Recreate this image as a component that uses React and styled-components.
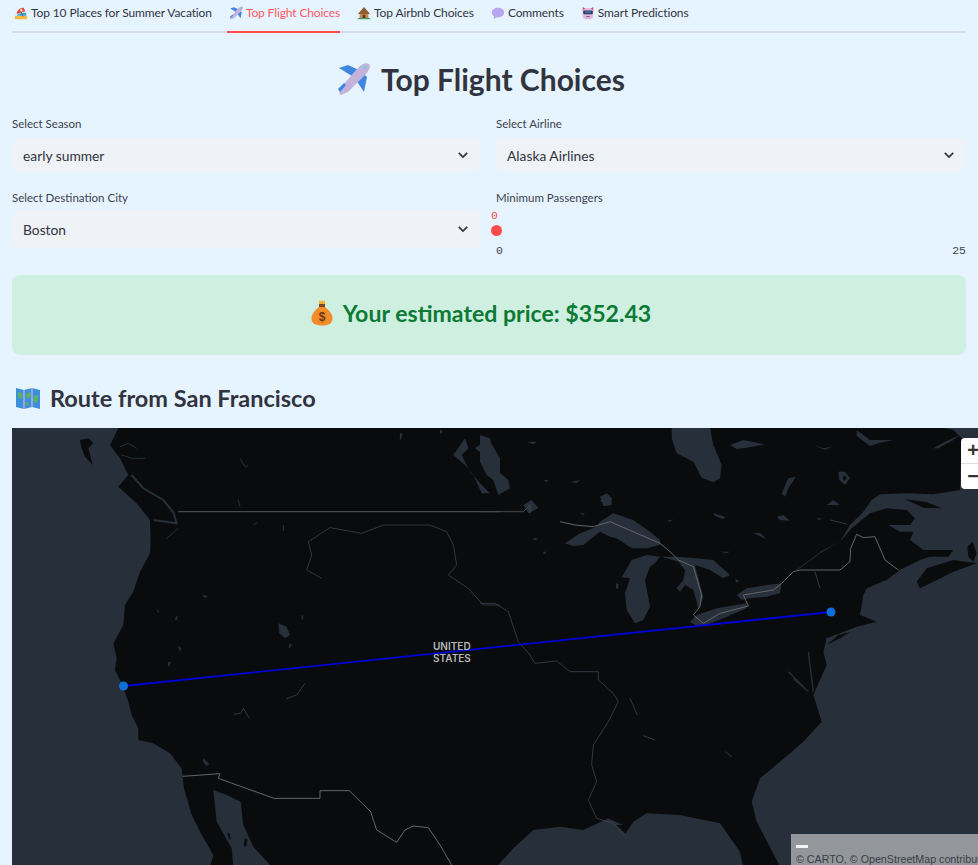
import React from 'react';
import styled, { createGlobalStyle } from 'styled-components';

const OCEAN = '#262f3a';
const RIVER = '#3a4149';
const BORDER = '#62666a';

const tabs = [
  { id: 'places', label: 'Top 10 Places for Summer Vacation', Icon: BeachIcon },
  { id: 'flights', label: 'Top Flight Choices', Icon: PlaneIcon, active: true },
  { id: 'airbnb', label: 'Top Airbnb Choices', Icon: HutIcon },
  { id: 'comments', label: 'Comments', Icon: BubbleIcon },
  { id: 'predictions', label: 'Smart Predictions', Icon: RobotIcon },
];

function BeachIcon({ size = 14 }) {
  return (
    <svg width={size} height={size} viewBox="0 0 16 16">
      <path d="M1 11h14v3a1 1 0 0 1-1 1H2a1 1 0 0 1-1-1z" fill="#f4b73f" />
      <path d="M3 11c2-3 7-4 11-3v3z" fill="#35a6dd" />
      <path d="M3 9c0-4 4-7 8-7l2 4z" fill="#e0453f" />
      <path d="M7 4l2-1 1 3-2 1z" fill="#f5f0ea" />
      <path d="M8 6l2 6" stroke="#7a4a2a" strokeWidth="1" />
    </svg>
  );
}

function PlaneIcon({ size = 14 }) {
  return (
    <svg width={size} height={size} viewBox="0 0 34 34">
      <path d="M16 14L3 6l9-3 13 6z" fill="#3f86e0" />
      <path d="M20 18l8 12 3-15-5-4z" fill="#3f86e0" />
      <path d="M33 2C30 0 26 2 22 6L6 24l-3 8 2 1 7-3L30 12c3-4 5-7 3-10z" fill="#c3b3da" />
      <path d="M2 27l6-6 2 2-6 7z" fill="#3f86e0" />
      <path d="M27 6l3-2.500 1 1.500-2.500 2.500z" fill="#5fd0e8" />
    </svg>
  );
}

function HutIcon({ size = 14 }) {
  return (
    <svg width={size} height={size} viewBox="0 0 16 16">
      <path d="M3 14V8h10v6z" fill="#c98a52" />
      <path d="M8 1L1 9h14z" fill="#8f5a34" />
      <path d="M6.500 10h3v4h-3z" fill="#5a3420" />
      <path d="M0 15c2-2 5-2 8-1 3-1 6-1 8 1z" fill="#3f9b5a" />
    </svg>
  );
}

function BubbleIcon({ size = 14 }) {
  return (
    <svg width={size} height={size} viewBox="0 0 16 16">
      <path d="M8 2c4 0 7 2 7 5.500S12 13 8 13c-.7 0-1.300 0-2-.2L3 15l.4-3.200C2 10.800 1 9.300 1 7.500 1 4 4 2 8 2z" fill="#b9a6ee" />
    </svg>
  );
}

function RobotIcon({ size = 14 }) {
  return (
    <svg width={size} height={size} viewBox="0 0 16 16">
      <path d="M2 1l3 2h6l3-2v5H2z" fill="#d9416a" />
      <rect x="2" y="3" width="12" height="12" rx="3.500" fill="#e2b7de" />
      <rect x="2.500" y="5" width="11" height="4.500" rx="1.500" fill="#2b3a5e" />
      <path d="M4.500 7h7" stroke="#59a8e8" strokeWidth="1" />
      <path d="M6 12h4" stroke="#7b4a78" strokeWidth="1" />
    </svg>
  );
}

function MoneyIcon() {
  return (
    <svg width="24" height="26" viewBox="0 0 24 26">
      <path d="M9 0l1.500 1.500L12 .5l1.500 1L15 0v4H9z" fill="#f2b233" />
      <rect x="9" y="4" width="6" height="3" fill="#7a4a22" />
      <path d="M9 7h6c4 3 7.500 7 7.500 11.500 0 5-4 7-10.500 7S1.500 23.500 1.500 18.500C1.500 14 5 10 9 7z" fill="#f08c2a" />
      <text x="12" y="21" textAnchor="middle" fontSize="12" fontWeight="700" fontFamily="Liberation Sans, sans-serif" fill="#6e3a12">$</text>
    </svg>
  );
}

function MapIcon() {
  return (
    <svg width="26" height="24" viewBox="0 0 26 24">
      <path d="M1 2l8 2 8-2 8 2v19l-8-2-8 2-8-2z" fill="#3d8fdc" />
      <path d="M9 4v19M17 2v19" stroke="#cdb8e8" strokeWidth="1.200" />
      <path d="M3 6l4 1 1 4-3 2-2-2zM11 8l4-2 1 4-3 3-2-2zM19 10l4-1 0 6-3 2-2-3zM11 16l3 1-1 3-2-1z" fill="#58b368" />
    </svg>
  );
}

const Chevron = () => (
  <svg width="12" height="12" viewBox="0 0 12 12">
    <path d="M1.800 3.800L6 8l4.200-4.200" fill="none" stroke="#31333f" strokeWidth="1.700" />
  </svg>
);

// map parts are traced in 3x coordinates, hence the scale on each group
const WestMap = () => (
  <g transform="translate(0 425) scale(.33333)">
    <path
      fill={OCEAN}
      d="M0 0L360 0L330 60L360 100L385 150L355 185L410 235L450 285L452 350L450 385L420 440L400 500L375 540L370 600L340 655L350 700L345 735L365 775L385 830L395 870L415 910L415 945L460 955L510 985L545 1030L552 1090L575 1170L600 1220L640 1290L630 1325L0 1325z"
    />
    <path fill="#0a0b0c" d="M240 45L265 40L280 55L265 70L278 120L255 95L245 70z" />
    <path fill={OCEAN} d="M640 1095L680 1110L722 1130L730 1200L760 1265L815 1325L700 1325L695 1270L650 1190z" />
    <path fill="#0a0b0c" d="M682 1222l8 6 2 18-6-6zM735 1240l8 4-6 22-6-6z" />
    <path
      d="M395 150L430 190L490 225L520 262L530 295L460 285"
      fill="none"
      stroke={OCEAN}
      strokeWidth="6"
    />
    <path fill={OCEAN} d="M1360 90L1395 40L1405 70L1385 90L1410 140L1445 180L1470 205L1445 205L1420 150L1395 120zM1425 70L1465 40L1500 100L1500 155L1465 100z" />
    <path fill={OCEAN} d="M835 595L860 605L870 630L855 640L838 625zM610 510l12 2-2 6-10-2zM470 550l8 12-4 2zM530 572l4 4-6 12-3-6zM535 662l8 6-1 12-6-8zM505 710l8 2-6 14-4-8zM870 655l6 4-8 12-2-6zM905 570l5 2-3 14-3-2zM610 1000l18 16-8 8-12-16zM1200 25l8 2-6 18-3-4zM1320 15l8 2-3 10-5-3z" />
    <g fill="none" stroke={OCEAN} strokeWidth="3">
      <path d="M360 65L385 55L410 70M365 90L395 100L435 100M500 340L535 310" />
      <path d="M720 100L735 125L745 122M715 225L720 245M760 300L772 292M850 300V318" />
    </g>
    <path d="M535 260H1500" fill="none" stroke="#47494b" strokeWidth="3.500" />
    <path
      d="M548 1054L660 1046L655 1060L822 1120H960V1097H1048L1112 1160L1130 1215L1190 1252L1215 1215L1240 1203L1285 1208L1320 1260L1355 1320"
      fill="none"
      stroke={BORDER}
      strokeWidth="3"
    />
    <path
      d="M1500 540L1450 540L1405 490L1345 450L1370 420L1360 360L1340 320L1290 300L1150 300L1085 325L990 308L925 350L935 390L920 435L965 460"
      fill="none"
      stroke={RIVER}
      strokeWidth="2.500"
    />
    <path d="M915 775L890 810L858 822M700 868L722 865L730 850L748 880" fill="none" stroke={RIVER} strokeWidth="2.500" />
  </g>
);

const EastMap = () => (
  <g transform="translate(480 425) scale(.33333)">
    <path
      fill={OCEAN}
      d="M1020 380L1080 350L1110 300L1150 260L1175 225L1200 208L1280 205L1360 208L1440 195L1445 40L1420 15L1385 8L1520 8L1520 1325L900 1325L830 1190L815 1130L840 1060L900 1010L970 950L1025 890L1000 810L1040 720L1030 680L1040 640L1080 625L1130 605L1190 590L1140 570L1150 510L1160 490L1220 465L1260 435L1320 405L1350 395L1405 395L1420 375L1380 375L1330 375L1290 345L1300 320L1260 320L1225 300L1290 300L1305 280L1280 255L1220 250L1170 265L1115 310L1080 350L1020 385z"
    />
    <path d="M1022 382L985 410L950 435" fill="none" stroke={OCEAN} strokeWidth="3" />
    <path
      fill={OCEAN}
      d="M50 1325L100 1270L160 1215L240 1205L310 1215L385 1180L430 1200L410 1200L455 1245L430 1235L460 1190L500 1165L600 1170L720 1195L780 1280L790 1325z"
    />
    <path fill="#0a0b0c" d="M1310 470L1340 430L1420 405L1490 415L1420 440L1360 470L1320 490zM1465 395L1462 365L1478 350L1490 385L1480 410zM1275 222L1340 232L1385 250L1330 248z" />
    <path fill="#0a0b0c" d="M1040 660L1075 630L1110 622L1080 640z" />
    <path fill={OCEAN} d="M1045 636L1105 622L1075 630z" />
    <path fill={OCEAN} d="M575 8L690 8L700 60L725 120L720 160L700 172L665 158L640 110L590 85L575 40z" />
    <path fill={OCEAN} d="M0 30L30 40L45 130L85 165L90 190L55 210L40 165L20 150L0 110z" />
    <path fill={OCEAN} d="M360 215L380 205L396 220L390 240L370 243zM905 205L925 160L948 155L925 190L915 215zM1360 70L1395 50L1440 30L1420 45L1375 70zM750 60L790 45L855 58L800 68L770 72zM140 50h30l-10 8zM270 172l30-8-10 10zM130 240l25-15 20 25-30 15zM1040 240L1060 225L1080 240L1060 240zM1010 278l15 3-8 5zM700 265L738 280L710 275zM190 165h15l-5 7zM160 340h10v5h-10zM190 380h8v6h-8zM1000 60l30 10 25 -5-20 10zM1130 15l40 30 70 0-40 8-30 10-40-30z" />
    <path d="M1075 140L1095 140L1110 160L1095 180L1078 165z" fill={OCEAN} />
    <path d="M1087 155L1096 152L1100 162L1092 168z" fill="#0a0b0c" />
    <path d="M985 680L1000 800M925 740L975 790M940 760L985 800M1040 640V660" fill="none" stroke={OCEAN} strokeWidth="4" />
    <g fill="none" stroke={RIVER} strokeWidth="2.500">
      <path d="M0 535H45L85 560L115 650L150 690L165 715L230 708L270 740H355L355 765L400 805L415 830L385 890L340 960L335 1020L350 1070L325 1125L350 1180L400 1195L440 1240" />
      <path d="M450 820L472 870M490 932L525 945M735 980L755 995M1005 440L1020 490M1050 285L1100 297" />
    </g>
    <path d="M0 260H130L150 240L150 265" fill="none" stroke="#47494b" strokeWidth="3" />
    <path
      d="M960 435H1080L1110 410L1112 370L1130 328L1150 338L1185 335L1215 405L1255 435"
      fill="none"
      stroke={BORDER}
      strokeWidth="3"
    />
  </g>
);

const GreatLakes = () => (
  <g transform="translate(560 500) scale(.33333)">
    <path
      fill={OCEAN}
      d="M15 130L60 100L110 80L120 65L160 40L220 60L270 95L300 120L300 135L260 145L215 145L170 115L150 110L120 95L70 135L40 138zM185 232L215 180L260 165L300 170L285 190L270 200L255 240L270 320L250 360L225 370L200 330L195 280L210 235zM305 170L350 170L410 175L460 180L510 225L490 235L450 210L405 195L430 290L415 330L410 305L400 270L375 255L360 275L350 265L370 240L375 210L355 185zM390 365L410 345L470 325L560 310L560 325L500 350L440 375L405 375zM530 285L560 265L620 255L665 250L660 280L620 290L570 295L545 300z"
    />
    <path
      fill={OCEAN}
      d="M120 0L155 0L155 15L135 18zM460 40L495 50L490 58L465 48zM650 50L670 45L690 62L660 60zM580 100L600 98L622 120L600 108zM480 155L510 155L500 160zM168 250L176 252L174 268L168 264zM525 235L540 245L528 247zM60 38L76 42L68 46zM322 62L340 58L328 66z"
    />
    <path
      d="M0 65L45 75L100 80L150 65L300 130L330 155L355 180L400 200L425 285L420 320L400 345L430 370L480 340L565 318L550 285L640 270L665 250L700 215L720 210"
      fill="none"
      stroke={BORDER}
      strokeWidth="3"
    />
  </g>
);

const App = () => (
  <Page>
    <GlobalStyle />
    <TabBar>
      {tabs.map(({ id, label, Icon, active }) => (
        <Tab key={id} $active={active}>
          <Icon />
          {label}
        </Tab>
      ))}
    </TabBar>
    <Title>
      <PlaneIcon size={34} />
      Top Flight Choices
    </Title>
    <Filters>
      <Field>
        <FieldLabel>Select Season</FieldLabel>
        <SelectBox $short>
          early summer
          <Chevron />
        </SelectBox>
      </Field>
      <Field>
        <FieldLabel>Select Airline</FieldLabel>
        <SelectBox $short>
          Alaska Airlines
          <Chevron />
        </SelectBox>
      </Field>
      <Field>
        <FieldLabel>Select Destination City</FieldLabel>
        <SelectBox>
          Boston
          <Chevron />
        </SelectBox>
      </Field>
      <Field>
        <FieldLabel>Minimum Passengers</FieldLabel>
        <SliderValue>0</SliderValue>
        <SliderThumb />
        <SliderScale>
          <span>0</span>
          <span>25</span>
        </SliderScale>
      </Field>
    </Filters>
    <PriceBanner>
      <MoneyIcon />
      Your estimated price: $352.43
    </PriceBanner>
    <RouteHeading>
      <MapIcon />
      Route from San Francisco
    </RouteHeading>
    <MapFrame>
      <svg width="1000" height="437" viewBox="12 428 1000 437">
        <WestMap />
        <EastMap />
        <GreatLakes />
        <path d="M124 686L831 612" stroke="#0000d8" strokeWidth="1.800" fill="none" />
        <circle cx="123.500" cy="686" r="4.500" fill="#0f6fd6" />
        <circle cx="831" cy="612" r="4.500" fill="#0f6fd6" />
      </svg>
      <CountryLabel>
        UNITED
        <br />
        STATES
      </CountryLabel>
      <ZoomControl>
        <ZoomButton>+</ZoomButton>
        <ZoomButton>−</ZoomButton>
      </ZoomControl>
      <Attribution>
        <ScaleBar />
        © CARTO, © OpenStreetMap contributors
      </Attribution>
    </MapFrame>
  </Page>
);

const GlobalStyle = createGlobalStyle`
  html, body {
    margin: 0;
    height: 100%;
    overflow: hidden;
    background: #e6f4ff;
  }
`;

const Page = styled.div`
  height: 865px;
  box-sizing: border-box;
  padding: 0 12px;
  overflow: hidden;
  background: #e6f4ff;
  color: #31333f;
  font-family: "Lato", "Noto Sans", sans-serif;
`;

const TabBar = styled.div`
  display: flex;
  gap: 15px;
  height: 33px;
  box-sizing: border-box;
  border-bottom: 2px solid #d5dee6;
`;

const Tab = styled.div`
  display: flex;
  align-items: center;
  gap: 3px;
  height: 33px;
  box-sizing: border-box;
  padding: 0 0 6px 2px;
  font-size: 12px;
  letter-spacing: -0.12px;
  white-space: nowrap;
  color: ${({ $active }) => ($active ? '#ff5a5f' : '#31333f')};
  border-bottom: 2px solid ${({ $active }) => ($active ? '#ff4b4b' : 'transparent')};
`;

const Title = styled.h1`
  display: flex;
  justify-content: center;
  align-items: center;
  gap: 11px;
  margin: 0;
  padding: 24px 17px 15px 0;
  height: 44px;
  font-size: 30px;
  font-weight: 700;
  line-height: 44px;
  color: #31333f;
`;

const Filters = styled.div`
  display: grid;
  grid-template-columns: 468px 470px;
  column-gap: 16px;
  row-gap: 18px;
`;

const Field = styled.div`
  display: flex;
  flex-direction: column;
`;

const FieldLabel = styled.label`
  height: 15px;
  margin-bottom: 5px;
  font-size: 11.500px;
  line-height: 15px;
  color: #3d4150;
`;

const SelectBox = styled.div`
  display: flex;
  justify-content: space-between;
  align-items: center;
  height: ${({ $short }) => ($short ? 34 : 38)}px;
  margin-top: ${({ $short }) => ($short ? 2 : 0)}px;
  box-sizing: border-box;
  padding: 0 11px;
  border-radius: 7px;
  background: #eff2f6;
  font-size: 13.800px;
`;

const SliderValue = styled.span`
  margin-left: -5px;
  height: 12px;
  font-family: "Liberation Mono", monospace;
  font-size: 11.500px;
  line-height: 12px;
  color: #ff4b4b;
`;

const SliderThumb = styled.span`
  width: 11px;
  height: 11px;
  margin: 2.500px 0 0 -5px;
  border-radius: 50%;
  background: #ff4b4b;
`;

const SliderScale = styled.div`
  display: flex;
  justify-content: space-between;
  margin-top: 8px;
  font-family: "Liberation Mono", monospace;
  font-size: 11.500px;
  line-height: 13px;
  color: #3d4150;
`;

const PriceBanner = styled.div`
  display: flex;
  justify-content: center;
  align-items: center;
  gap: 9px;
  height: 80px;
  box-sizing: border-box;
  margin-top: 18.500px;
  padding: 0 17px 4px 0;
  border-radius: 8px;
  background: #cff0e0;
  color: #0c7a35;
  font-size: 23.100px;
  font-weight: 700;
`;

const RouteHeading = styled.h2`
  display: flex;
  align-items: center;
  gap: 9px;
  height: 34px;
  margin: 26px 0 13px;
  padding-left: 3px;
  font-size: 23.500px;
  font-weight: 700;
  color: #31333f;
`;

const MapFrame = styled.div`
  position: relative;
  width: 1000px;
  height: 437px;
  overflow: hidden;
  background: #0a0b0c;

  & > svg {
    display: block;
  }
`;

const CountryLabel = styled.div`
  position: absolute;
  left: 421px;
  top: 212px;
  font-family: "Inter", sans-serif;
  font-size: 10px;
  font-weight: 600;
  line-height: 12px;
  color: #b4b7ba;
`;

const ZoomControl = styled.div`
  position: absolute;
  left: 949px;
  top: 10px;
  width: 24px;
  border-radius: 4px;
  background: #fff;
`;

const ZoomButton = styled.div`
  display: flex;
  align-items: center;
  justify-content: center;
  height: 25px;
  font-family: "Liberation Sans", sans-serif;
  font-size: 20px;
  font-weight: 700;
  color: #333;

  & + & {
    border-top: 1px solid #ddd;
  }
`;

const Attribution = styled.div`
  position: absolute;
  left: 779px;
  top: 406px;
  width: 240px;
  height: 31px;
  box-sizing: border-box;
  padding: 11px 0 0 5px;
  background: #93979c;
  font-family: "Liberation Sans", sans-serif;
  font-size: 10.700px;
  line-height: 13px;
  white-space: nowrap;
  color: #3a3e44;
`;

const ScaleBar = styled.div`
  width: 12px;
  height: 3px;
  margin-bottom: 5px;
  background: #f4f4f4;
`;

export default App;
